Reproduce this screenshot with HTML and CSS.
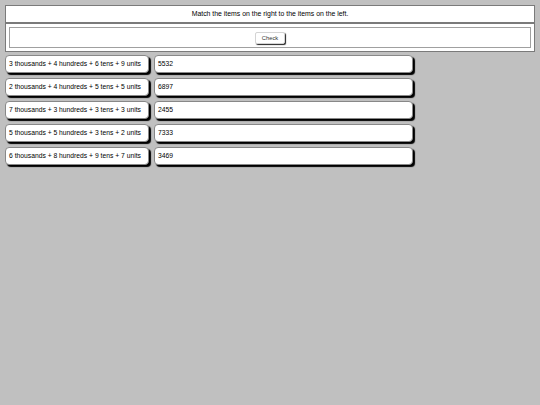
FILE: index.html
```html
<!DOCTYPE html>
<html>
<head>
<meta charset="utf-8">
<link rel="stylesheet" href="styles.css">
</head>
<body>
<div class="page">
  <div class="header">Match the items on the right to the items on the left.</div>
  <div class="panel">
    <div class="inner">
      <button class="check">Check</button>
    </div>
  </div>
  <div class="rows">
    <div class="row"><div class="card left">3 thousands + 4 hundreds + 6 tens + 9 units</div><div class="card right">5532</div></div>
    <div class="row"><div class="card left">2 thousands + 4 hundreds + 5 tens + 5 units</div><div class="card right">6897</div></div>
    <div class="row"><div class="card left">7 thousands + 3 hundreds + 3 tens + 3 units</div><div class="card right">2455</div></div>
    <div class="row"><div class="card left">5 thousands + 5 hundreds + 3 tens + 2 units</div><div class="card right">7333</div></div>
    <div class="row"><div class="card left">6 thousands + 8 hundreds + 9 tens + 7 units</div><div class="card right">3469</div></div>
  </div>
</div>
</body>
</html>
```
FILE: styles.css
```css
html, body {
  margin: 0;
  padding: 0;
  background: #c0c0c0;
}
body {
  font-family: "Liberation Sans", Arial, sans-serif;
  font-size: 7px;
  color: #000;
}
.page {
  padding: 5px;
}
.header {
  background: #fff;
  border: 1px solid #7a7a7a;
  height: 16px;
  line-height: 16px;
  text-align: center;
  font-size: 6.9px;
}
.panel {
  background: #fff;
  border: 1px solid #7a7a7a;
  padding: 3px;
  margin-bottom: 3px;
}
.inner {
  border: 1px solid #a0a0a0;
  height: 19px;
  display: flex;
  align-items: center;
  justify-content: center;
}
.check {
  font-family: "Liberation Sans", Arial, sans-serif;
  font-size: 5.8px;
  background: #fff;
  border: 1px solid #d4d4d4;
  border-radius: 2px;
  box-shadow: 1px 1px 1px #222;
  padding: 0 6px;
  height: 12px;
  line-height: 10px;
  color: #333;
}
.rows {
  display: flex;
  flex-direction: column;
  gap: 5px;
}
.row {
  display: flex;
  gap: 5px;
}
.card {
  background: #fff;
  border: 1px solid #888;
  border-radius: 4px;
  box-shadow: 2px 2px 1px #000;
  height: 16px;
  line-height: 16px;
  padding: 0 3px;
  white-space: nowrap;
  font-size: 6.75px;
}
.left {
  width: 136px;
}
.right {
  width: 251px;
}
```
